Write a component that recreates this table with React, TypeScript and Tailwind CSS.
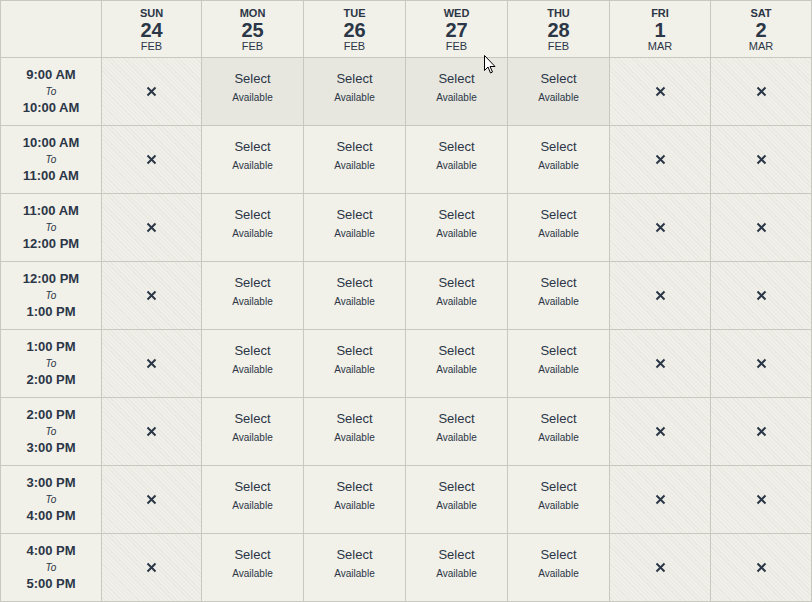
import React from "react";

type Day = { dow: string; date: string; month: string; open: boolean };

const days: Day[] = [
  { dow: "SUN", date: "24", month: "FEB", open: false },
  { dow: "MON", date: "25", month: "FEB", open: true },
  { dow: "TUE", date: "26", month: "FEB", open: true },
  { dow: "WED", date: "27", month: "FEB", open: true },
  { dow: "THU", date: "28", month: "FEB", open: true },
  { dow: "FRI", date: "1", month: "MAR", open: false },
  { dow: "SAT", date: "2", month: "MAR", open: false },
];

const slots = [
  ["9:00 AM", "10:00 AM"],
  ["10:00 AM", "11:00 AM"],
  ["11:00 AM", "12:00 PM"],
  ["12:00 PM", "1:00 PM"],
  ["1:00 PM", "2:00 PM"],
  ["2:00 PM", "3:00 PM"],
  ["3:00 PM", "4:00 PM"],
  ["4:00 PM", "5:00 PM"],
];

const cell = "border-r border-b border-[#c9c8c0] flex flex-col items-center justify-center";
const hatch =
  "bg-[image:repeating-linear-gradient(45deg,#f0efe9_0px,#f0efe9_2px,#e9e8e1_2px,#e9e8e1_3px)]";

function Cross() {
  return (
    <svg width="11" height="11" viewBox="0 0 11 11">
      <path d="M1.5 1.5 L9.5 9.5 M9.5 1.5 L1.5 9.5" stroke="#2b3646" strokeWidth="2" />
    </svg>
  );
}

export default function App() {
  return (
    <div className="relative w-[812px] h-[602px] bg-[#f1f0e9] text-[#2b3646] font-['Liberation_Sans',Arial,sans-serif] overflow-hidden">
      <div className="grid grid-cols-[101px_100px_102px_102px_102px_102px_101px_101px] grid-rows-[57px_repeat(8,68px)] border-l border-t border-[#c9c8c0]">
        <div className={cell} />
        {days.map((d) => (
          <div key={d.dow} className={`${cell} pt-[1px]`}>
            <div className="text-[11px] font-bold leading-[13px]">{d.dow}</div>
            <div className="text-[20px] font-bold leading-[20px]">{d.date}</div>
            <div className="text-[11px] leading-[13px]">{d.month}</div>
          </div>
        ))}

        {slots.map(([from, to], r) => (
          <React.Fragment key={from}>
            <div className={cell}>
              <div className="text-[13px] font-bold leading-[16px]">{from}</div>
              <div className="text-[10px] italic leading-[17px]">To</div>
              <div className="text-[13px] font-bold leading-[16px]">{to}</div>
            </div>
            {days.map((d) =>
              d.open ? (
                <div
                  key={d.dow}
                  className={`${cell} pb-[8px] ${r === 0 ? "bg-[#e7e7e0]" : ""}`}
                >
                  <div className="text-[13px] leading-[16px] mb-[5px]">Select</div>
                  <div className="text-[10px] leading-[12px]">Available</div>
                </div>
              ) : (
                <div key={d.dow} className={`${cell} ${hatch} pb-[1px]`}>
                  <Cross />
                </div>
              )
            )}
          </React.Fragment>
        ))}
      </div>

      {/* mouse pointer */}
      <svg className="absolute left-[484px] top-[55px]" width="12" height="19" viewBox="0 0 12 19">
        <path d="M0.5 0.5 L0.5 15.5 L4 12 L6.5 18 L8.5 17 L6 11.5 L11 11.5 Z" fill="#fff" stroke="#000" strokeWidth="1" />
      </svg>
    </div>
  );
}
